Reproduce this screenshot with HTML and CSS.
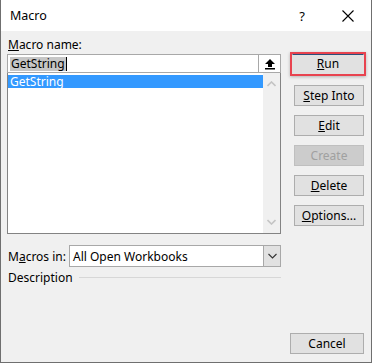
FILE: index.html
```html
<!DOCTYPE html>
<html>
<head>
<meta charset="utf-8">
<link rel="stylesheet" href="styles.css">
</head>
<body>
<div class="window">
  <div class="titlebar">
    <span class="title">Macro</span>
    <span class="tb-help">?</span>
    <span class="tb-close">
      <svg width="14" height="14" viewBox="0 0 14 14"><path d="M1.5 1.5 L12.5 12.5 M12.5 1.5 L1.5 12.5" stroke="#000" stroke-width="1.1" fill="none"/></svg>
    </span>
  </div>
  <div class="content">
    <div class="left">
      <div class="label"><u>M</u>acro name:</div>
      <div class="namebox">
        <div class="nameinput"><span class="sel">GetString</span><span class="caret"></span></div>
        <div class="upbtn">
          <svg width="12" height="12" viewBox="0 0 12 12"><path d="M6 1 L11 6 L8 6 L8 9 L4 9 L4 6 L1 6 Z" fill="#000"/><rect x="1" y="10" width="10" height="1.5" fill="#000"/></svg>
        </div>
      </div>
      <div class="listbox">
        <div class="items">
          <div class="item selected">GetString</div>
        </div>
        <div class="scroll">
          <svg width="9" height="6" viewBox="0 0 9 6"><path d="M0.5 5 L4.5 1 L8.5 5" stroke="#c4c4c4" stroke-width="1.6" fill="none"/></svg>
          <svg width="9" height="6" viewBox="0 0 9 6"><path d="M0.5 1 L4.5 5 L8.5 1" stroke="#c4c4c4" stroke-width="1.6" fill="none"/></svg>
        </div>
      </div>
      <div class="inrow">
        <span class="inlabel">M<u>a</u>cros in:</span>
        <div class="combo">
          <span class="combotext">All Open Workbooks</span>
          <span class="dropbtn">
            <svg width="9" height="6" viewBox="0 0 9 6"><path d="M0.5 1 L4.5 5 L8.5 1" stroke="#333" stroke-width="1.1" fill="none"/></svg>
          </span>
        </div>
      </div>
      <div class="descrow">
        <span>Description</span>
        <span class="rule"></span>
      </div>
    </div>
    <div class="right">
      <div class="runwrap"><button class="btn default"><u>R</u>un</button></div>
      <button class="btn"><u>S</u>tep Into</button>
      <button class="btn"><u>E</u>dit</button>
      <button class="btn disabled">Create</button>
      <button class="btn"><u>D</u>elete</button>
      <button class="btn"><u>O</u>ptions...</button>
      <div class="spacer"></div>
      <button class="btn cancel">Cancel</button>
    </div>
  </div>
</div>
</body>
</html>
```

FILE: styles.css
```css
* { box-sizing: border-box; }
html, body { margin: 0; padding: 0; }
body {
  font-family: "Noto Sans", "Open Sans", sans-serif;
  font-size: 12px;
  color: #000;
  background: #fff;
}
.window {
  width: 372px;
  height: 363px;
  border: 1px solid #6f6f6f;
  border-top: none;
  display: flex;
  flex-direction: column;
  background: #f0f0f0;
}
.titlebar {
  height: 31px;
  background: #fff;
  display: flex;
  align-items: center;
  flex-shrink: 0;
}
.title {
  padding-left: 9px;
  flex: 1;
  font-size: 12.5px;
}
.tb-help {
  font-size: 13px;
  width: 46px;
  text-align: center;
}
.tb-close {
  width: 46px;
  display: flex;
  justify-content: center;
  align-items: center;
}
.content {
  flex: 1;
  display: flex;
  padding: 6px 6px 8px 6px;
}
.left {
  width: 274px;
  display: flex;
  flex-direction: column;
}
.label {
  height: 17px;
  line-height: 16px;
  padding-left: 1px;
}
.namebox {
  height: 19px;
  display: flex;
  border: 1px solid #a8a8a8;
  background: #fff;
}
.nameinput {
  flex: 1;
  display: flex;
  align-items: center;
  padding-left: 2px;
}
.sel {
  background: #c6c6c6;
  line-height: 14px;
  padding: 0 1px;
}
.caret {
  width: 1px;
  height: 14px;
  background: #000;
}
.upbtn {
  width: 22px;
  border-left: 1px solid #a8a8a8;
  display: flex;
  align-items: center;
  justify-content: center;
  background: #fff;
}
.listbox {
  height: 161px;
  border: 1px solid #838383;
  border-top: none;
  background: #fff;
  display: flex;
}
.items {
  flex: 1;
  padding: 2px 0 0 0;
}
.item {
  height: 13px;
  line-height: 13px;
  padding-left: 2px;
}
.item.selected {
  background: #3399ff;
  color: #fff;
}
.scroll {
  width: 17px;
  background: #f0f0f0;
  display: flex;
  flex-direction: column;
  justify-content: space-between;
  align-items: center;
  padding: 8px 0 8px 0;
}
.inrow {
  margin-top: 11px;
  display: flex;
  align-items: center;
  height: 22px;
}
.inlabel {
  width: 62px;
  padding-left: 1px;
}
.combo {
  flex: 1;
  height: 22px;
  border: 1px solid #a8a8a8;
  background: #fff;
  display: flex;
  align-items: center;
}
.combotext {
  flex: 1;
  padding-left: 3px;
}
.dropbtn {
  width: 17px;
  height: 100%;
  background: #e1e1e1;
  border-left: 1px solid #a8a8a8;
  display: flex;
  align-items: center;
  justify-content: center;
}
.descrow {
  display: flex;
  align-items: center;
  margin-top: 1px;
  height: 18px;
}
.descrow span:first-child { padding-left: 1px; }
.rule {
  flex: 1;
  height: 1px;
  background: #d7d7d7;
  margin-left: 6px;
}
.right {
  flex: 1;
  display: flex;
  flex-direction: column;
  align-items: flex-end;
  padding-left: 9px;
  padding-top: 15px;
}
.btn {
  font-family: inherit;
  font-size: 12px;
  width: 70px;
  height: 21px;
  background: #e1e1e1;
  border: 1px solid #adadad;
  color: #000;
  padding: 0;
  margin: 0 1px 9px 0;
  line-height: 18px;
}
.runwrap {
  width: 76px;
  height: 24px;
  border: 2px solid #e8434f;
  display: flex;
  align-items: center;
  justify-content: center;
  margin-bottom: 9px;
  box-shadow: 0 1px 3px rgba(0,0,0,0.25);
  margin-right: -1px;
}
.runwrap .btn {
  margin: 0;
  width: 72px;
  height: 20px;
  border: 1px solid #e1e1e1;
  border-top-color: #2b4f7a;
}
.btn.disabled {
  color: #a0a0a0;
  background: #cccccc;
  border-color: #bfbfbf;
}
.spacer { flex: 1; }
.btn.cancel {
  width: 74px;
  margin-bottom: 0;
}
```
